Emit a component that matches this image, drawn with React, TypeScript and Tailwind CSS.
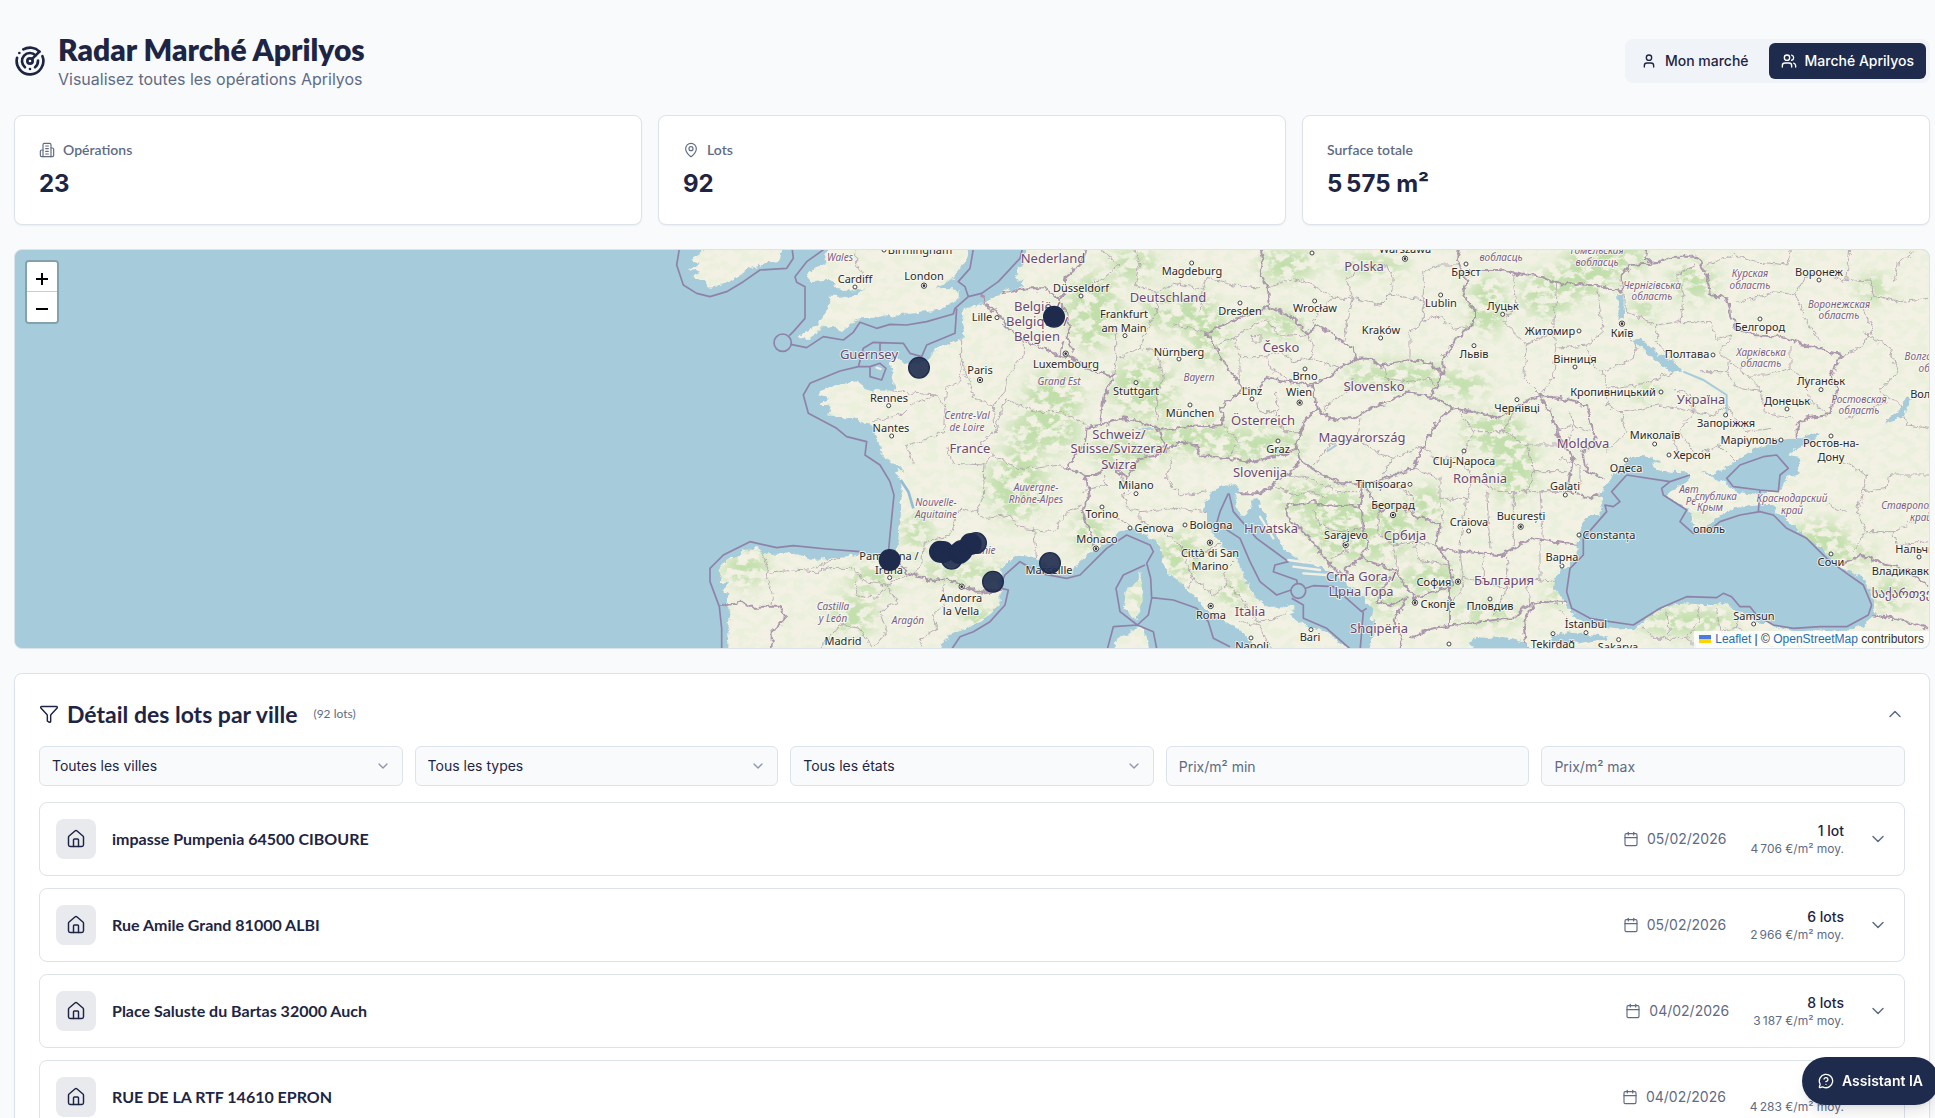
import { useState } from 'react';
import type { ReactNode } from 'react';
import {
  Calendar,
  ChevronDown,
  ChevronUp,
  Filter,
  Home,
  MapPin,
  MessageCircleQuestion,
  Radar,
  User,
  Users,
} from 'lucide-react';

interface Operation {
  address: string;
  date: string;
  lots: string;
  price: number;
}

const operations: Operation[] = [
  { address: 'impasse Pumpenia 64500 CIBOURE', date: '05/02/2026', lots: '1 lot', price: 4706 },
  { address: 'Rue Amile Grand 81000 ALBI', date: '05/02/2026', lots: '6 lots', price: 2966 },
  { address: 'Place Saluste du Bartas 32000 Auch', date: '04/02/2026', lots: '8 lots', price: 3187 },
  { address: 'RUE DE LA RTF 14610 EPRON', date: '04/02/2026', lots: '4 lots', price: 4283 },
];

// French grouping: narrow no-break space between thousands
function formatNumber(n: number): string {
  return String(n).replace(/\B(?=(\d{3})+$)/g, '\u202f');
}

// All map geometry is in thirds of a pixel, origin near the Irish coast.
const LAND = [
  // continent
  'M1105 0L1085 60 1065 95 1035 130 1030 145 1010 150 965 178 925 185 912 195 908 235 915 262 905 280 880 292 840 308 812 325 808 345 790 355 750 350 730 354 718 342 690 345 698 375 695 400 703 425 697 438 670 435 650 432 640 440 620 432 600 415 580 408 560 415 535 420 510 430 480 438 478 448 495 452 512 462 485 470 482 480 505 480 510 500 500 508 530 510 560 520 580 518 600 530 625 535 645 555 655 575 650 590 665 608 658 612 680 645 715 660 735 680 720 672 708 690 722 702 725 730 722 820 715 880 705 922 690 932 660 927 620 932 600 928 560 937 520 940 470 945 400 925 360 927 310 925 290 910 260 912 235 932 200 945 172 975 185 990 182 1010 205 1012 190 1035 205 1050 200 1075 210 1110 205 1150 205 1220L835 1220 850 1190 870 1170 930 1145 990 1105 1020 1080 1018 1050 1028 1035 1010 1010 1032 985 1020 975 1040 950 1060 935 1095 930 1130 940 1140 955 1180 965 1215 975 1240 970 1260 950 1290 925 1308 910 1330 900 1360 880 1375 860 1410 848 1440 855 1455 870 1490 890 1505 920 1510 960 1525 985 1555 1010 1580 1035 1610 1055 1630 1085 1665 1110 1690 1128 1730 1145 1750 1165 1775 1195 1790 1220L2075 1220 2000 1162 1950 1145 1905 1125 1892 1105 1905 1095 1905 1080 1850 1085 1820 1085 1790 1060 1755 1010 1745 975 1730 940 1700 915 1680 895 1655 860 1645 835 1640 810 1630 790 1635 775 1655 740 1680 725 1720 718 1735 732 1740 748 1722 750 1730 790 1745 818 1765 800 1775 770 1795 780 1810 800 1830 850 1860 890 1880 920 1920 945 1970 960 2020 985 2050 1010 2080 1035 2110 1055 2120 1075 2140 1090 2135 1120 2150 1150 2130 1190 2135 1220L3900 1220V0Z',
  // Great Britain
  'M930 0L920 45 895 80 880 100 850 118 830 130 880 130 897 140 895 165 860 180 830 195 780 200 740 205 710 218 690 210 640 218 600 220 575 235 545 262 520 240 490 245 470 265 440 285 415 278 430 265 470 240 495 205 515 165 510 155 550 155 590 152 612 130 590 135 570 140 535 125 500 105 455 108 440 90 470 70 500 50 495 30 520 0Z',
  // Ireland
  'M140 0L110 35 90 45 120 55 90 70 120 80 95 95 130 110 150 125 180 120 220 100 270 70 330 48 360 45 370 0Z',
  // Corsica, Sardinia
  'M1440 978L1447 1010 1450 1060 1440 1100 1430 1125 1410 1110 1390 1070 1400 1030 1430 1015Z',
  'M1360 1220L1370 1180 1410 1165 1440 1145 1460 1175 1470 1220Z',
].join('');

const INLAND_WATER = [
  // Black Sea
  'M2895 655L2870 670 2855 700 2830 725 2820 750 2828 775 2820 810 2785 810 2775 825 2760 860 2755 900 2748 930 2725 965 2705 970 2690 1000 2680 1025 2700 1045 2715 1075 2735 1100 2740 1115 2780 1135 2830 1148 2870 1153 2915 1152 2930 1145 2950 1125 2990 1100 3030 1080 3080 1075 3130 1080 3170 1080 3200 1070 3210 1090 3240 1100 3270 1115 3285 1135 3320 1130 3350 1145 3400 1160 3470 1155 3520 1160 3570 1155 3610 1140 3635 1120 3645 1080 3630 1040 3610 1000 3570 980 3530 965 3505 935 3470 900 3420 860 3380 820 3350 800 3340 780 3300 780 3260 785 3220 790 3185 810 3160 825 3140 845 3110 850 3100 840 3090 810 3080 790 3040 765 3017 755 3030 740 3065 720 3095 695 3080 682 3030 680 2990 675 2975 660 3000 645 2960 635 2920 630Z',
  // Sea of Azov
  'M3120 680L3160 685 3195 670 3220 650 3270 620 3310 605 3350 585 3420 580 3480 565 3460 590 3415 610 3380 630 3418 640 3415 685 3380 695 3370 725 3350 740 3320 740 3300 750 3240 745 3210 730 3190 710Z',
  // reservoirs
  'M2875 150L2890 150 2892 220 2876 224Z',
  'M2920 285L2945 280 2962 300 3000 330 3040 345 3070 380 3040 382 2965 330Z',
  'M3740 450L3755 460 3735 510 3675 540 3685 520 3725 490Z',
  // Marmara and the north Aegean
  'M2670 1175L2720 1162 2810 1170 2850 1178 2760 1195 2690 1200Z',
  'M2520 1175L2560 1180 2600 1195 2600 1215 2520 1215Z',
  'M2430 1190L2450 1175 2480 1180 2520 1175 2520 1215 2440 1215Z',
  // Zeeland, Venice, Kvarner
  'M1035 120L1060 95 1080 110 1095 100 1085 125 1050 142Z',
  'M1780 760L1795 765 1805 800 1820 810 1815 830 1795 820 1780 790Z',
  'M1480 555L1420 545 1470 560Z',
].join('');

const MARITIME = [
  'M60 0L50 60 70 120 110 145 150 155 200 140 250 110 300 75 380 70 400 40 395 0',
  'M510 0L440 50 405 95 410 112 435 125 435 220 400 260 388 272M392 298L440 308 490 275 550 285 580 262 600 232 650 250 690 238 740 240 800 230 880 207 885 190 925 155 965 145 1015 110 1080 40 1090 0',
  'M942 0L930 70 895 110 915 125 925 155',
  'M890 190L885 265 800 300 785 335 750 325 730 295 640 292 610 310 595 365 630 365 630 395 665 405 678 370 660 355 630 365M660 292V320M595 365L540 378 450 415 430 450 445 505 530 550 560 575 620 590 615 630 660 660 690 710 702 750 690 870 685 925',
  'M600 920L500 912 400 902 350 908 270 890 190 930 150 970 150 1010 178 1085 185 1150 185 1220',
  'M870 1220L900 1175 940 1160 990 1130 1035 1080 1045 1035 1025 1030M1025 1010L1035 990 1080 950 1140 985 1220 1000 1260 990 1310 940 1340 910 1400 870 1470 900 1480 920 1460 955 1472 1000 1475 1060 1465 1110 1432 1140 1380 1100 1368 1030 1390 990 1455 960',
  'M1475 1058L1540 1065 1610 1090 1645 1130 1660 1180 1710 1205M1432 1140L1360 1145 1340 1220M1432 1140L1480 1160 1492 1220',
  'M1705 745L1680 800 1670 835 1740 880 1770 950 1800 1010 1850 1050 1893 1035M1895 1060L1930 1080 1930 1120 2000 1150 2080 1220',
  'M1707 745L1720 800 1790 880 1885 950 1845 960 1840 980 1910 1005 1912 1015M1937 1030L1960 1022 2020 1025 2060 1060 2105 1100 2120 1090M2110 1100L2100 1220',
  'M2900 690L3030 710 3090 690M2900 690L2855 740 2880 770 2860 785 2835 780 2840 800 2770 880 2770 930 2730 970 2720 1040 2735 1090 2790 1120 2850 1130 2920 1140 3000 1090 3080 1055 3170 1058 3190 1045 3215 1055 3240 1085 3270 1085 3290 1110 3340 1140 3400 1150 3480 1145 3560 1145 3625 1110 3635 1080 3610 1020 3560 985 3500 940 3440 880 3380 850 3340 810 3300 800 3240 810 3180 830 3150 855 3100 865 3060 830 3080 795 3010 750 3005 730 3030 710',
  'M3200 700L3240 660 3310 635 3350 630 3385 670 3360 690 3355 740 3300 735 3220 725ZM3300 735L3295 800',
].join('');

const BORDERS = [
  'M965 145L980 185 1020 210 1035 240 1090 285 1140 305 1190 330 1240 340 1300 380 1360 395 1330 460 1320 540 1280 545 1275 590 1240 640 1220 670 1275 690 1290 750 1265 800 1290 860 1300 905',
  'M1030 145L1100 130 1160 130 1195 165 1215 150 1215 100 1260 60 1285 0M1195 165L1220 200 1230 250 1220 280 1240 320M1200 330L1210 290',
  'M1320 540L1390 520 1440 530 1500 555 1600 545 1690 540 1680 490 1750 430 1690 350 1640 265 1720 225 1800 195 1830 180 1822 120 1800 90 1810 50 1800 0',
  'M1820 185L1890 210 1920 240 1945 270 1970 240 2020 270 2040 285 2080 310 2090 340 2040 370 2010 395 1960 415M1750 430L1800 430 1820 395 1880 410 1960 420 1970 490 2010 520 2080 520 2140 485 2190 470 2240 440 2310 455 2350 385',
  'M2090 340L2135 342 2160 362 2250 345 2310 355 2350 385 2350 340 2390 280 2445 230 2445 200 2410 150 2420 110 2390 40 2400 0',
  'M2310 455L2380 490 2330 530 2290 600 2260 670 2200 690 2150 710 2110 715 2040 715 1970 680 1920 645 1910 610 1920 560 1940 520 1970 490M2380 490L2480 510 2510 520 2580 480 2640 450',
  'M1275 690L1310 690 1350 660 1400 700 1440 640 1500 630 1560 590 1610 600 1620 630 1700 640 1760 650 1850 635 1910 610M1500 555L1510 600 1500 630',
  'M1735 745L1800 745 1840 720 1880 690 1920 650M1880 780L1960 770 2000 785 2100 780 2110 715 2160 800 2210 770 2260 810 2340 835 2330 900 2370 960 2380 1020 2260 1060 2210 980 2160 960 2100 940 2125 900 2110 850 2110 800 2100 780',
  'M1880 780L1880 810 1960 890 2010 960 2060 1000 2060 970 2100 940M2210 980L2160 1040 2150 1070 2190 1080 2240 1060 2200 1130 2230 1180 2220 1215',
  'M2340 910L2400 920 2520 930 2620 880 2680 890 2758 900M2250 1180L2300 1155 2340 1145 2450 1130 2560 1120 2590 1090 2630 1070 2735 1075M2370 1020L2370 1140M2620 1080L2590 1130 2600 1215',
  'M2640 450L2680 520 2700 580 2740 640 2720 740 2790 760 2825 750M2640 450L2700 460 2780 480 2795 540 2810 600 2770 620 2780 680 2830 700',
  'M2430 75L2520 75 2640 95 2690 115 2740 115 2830 125 2885 140 2885 95 2910 60 2990 55 3040 35 3110 35 3140 90 3150 150 3200 160 3225 250 3280 270 3360 275 3400 290 3470 310 3545 330 3510 390 3530 430 3510 510 3440 520 3410 545 3410 580M2990 55L2955 40 2960 0',
  'M705 925L740 985 820 1008 850 1000 950 1040 1025 1035M180 1085L240 1070 270 1085 360 1085 375 1120 335 1160 335 1220',
  'M3545 960L3600 930 3680 960 3740 975 3807 1025M3630 1110L3700 1120 3740 1130 3807 1150',
].join('');

const REGIONS = [
  'M697 438L760 445 830 450 855 490 850 560 780 590 740 600 760 655M855 490L860 430 900 410 905 340 905 280M905 340L940 460 1000 480 1035 440 1040 400 1090 330 1090 285M1000 480L1005 560 960 590 1000 630 975 660 880 655 860 610M1005 560L1035 460 1120 500 1200 500 1280 540M1000 630L1070 670 1130 670 1200 660 1220 670',
  'M975 660L970 750 950 800 980 820 1050 810 1080 850 1180 860 1220 800 1265 780M950 800L900 790 870 870 790 895 785 960 760 990M1120 850L1130 940M830 450L750 480 720 510 640 530',
  'M590 20L590 60 610 90M460 970L500 950 540 940M310 925L325 975 320 1000 340 1060 335 1085M325 985L400 975 470 980 520 970 580 970 610 1010 680 1020 650 1060 590 1050 590 1010M680 1020L740 990M680 1020L710 1070 660 1100 680 1160 640 1209 600 1150 540 1140 480 1209M850 1005L850 1080 820 1110 830 1150 780 1180 790 1209',
  'M1420 0L1440 60 1425 120 1490 140 1540 115 1630 130 1640 100 1720 120 1800 130M1490 140L1490 200 1460 260 1440 310 1370 340 1370 250 1330 240M1440 310L1490 320 1510 400 1490 440 1490 530M1540 240L1600 250 1640 265M1630 130L1620 200M1320 15L1380 60 1330 100 1280 130M1370 340L1360 395',
  'M1820 130L1900 100 1960 120 2020 160 2080 160 2060 100 2120 60 2180 60 2200 100 2190 150 2160 180 2080 160M2020 160L1970 200 1960 240M2080 160L2060 240 2050 300M2190 150L2290 165 2290 80 2340 60 2400 60M2290 165L2290 230 2250 260 2250 345M2290 230L2330 210 2380 250 2440 240',
  'M1670 300L1720 280 1740 330 1740 390 1730 420M1720 280L1780 240 1820 225 1860 270 1920 275 1945 270M1740 335L1820 335 1830 370 1880 400M1820 335L1860 320 1900 350 1950 340 1960 300 1945 270M1775 275L1800 270 1800 290 1780 292ZM1950 340L1980 350 2040 370M2170 360L2180 400 2240 410 2310 400 2330 430M2080 400L2060 440 2000 480M2000 480L1990 510',
  'M1690 540L1740 590 1700 640M1790 470L1800 500 1850 500 1850 440M1850 500L1870 560 1920 560M2100 520L2090 580 2150 620 2200 640 2170 690M2090 580L2010 600 1960 660M2200 640L2290 600',
  'M1390 740L1400 790 1440 800 1550 790 1640 800M1380 690L1410 740 1390 760M1530 640L1520 700 1560 750 1640 740M1440 800L1440 830 1500 850 1560 900 1600 940 1660 910 1680 895M1560 900L1600 1000 1660 1050 1700 1020 1690 980 1730 940M1700 1020L1740 1050 1790 1130 1850 1120 1880 1100M1740 1130L1800 1140 1830 1209M1600 1000L1580 1035M1330 690L1340 720 1270 740M1320 790L1410 840',
  'M1840 720L1900 750 1960 740 2000 760M1880 690L1950 700 2030 740 2100 740M1960 790L1980 840 2040 860 2060 920 2010 940M2040 860L2110 850M2160 800L2150 860 2200 900 2260 890 2330 900M2200 900L2210 980M2260 810L2260 750 2200 720M2260 890L2280 950 2370 960',
  'M2260 670L2340 700 2340 760 2420 760 2440 700 2520 740 2600 740 2720 740M2340 760L2350 830M2420 760L2400 900M2440 700L2400 640 2320 640 2290 600M2400 640L2440 560 2530 560 2600 600 2620 680 2600 740M2440 560L2400 500M2530 560L2560 500M2600 600L2700 600M2480 740L2490 910M2560 740L2560 900M2640 740L2650 880M2620 680L2720 680',
  'M2400 920L2410 1000 2470 1010 2470 930M2470 1010L2540 1030 2600 1000 2690 1010M2540 930L2540 1030 2500 1110M2600 1000L2610 1080M2410 1000L2400 1050 2370 1070M2640 890L2640 1010',
  'M2560 80L2570 180 2530 230 2600 300 2680 260 2690 115M2600 300L2590 400 2640 450M2680 260L2690 310 2780 300 2830 260 2810 130M2690 310L2680 400 2640 450M2780 300L2800 360 2830 380 2920 340 2930 300 2900 270M2830 380L2840 430 2930 420 3000 400 3040 380M2840 430L2840 480 2880 500 2900 560 2840 620M2880 500L3000 480 3100 500 3090 450 3040 430M3100 500L3060 560 3100 620M3100 500L3160 510 3200 480 3250 560 3340 550',
  'M2890 140L2900 200 2990 240 3060 230 3070 150 3050 90 3110 60M2990 240L2990 290 3040 345M3060 230L3150 230 3170 280 3220 270 3180 320 3210 350 3200 380 3120 380M3210 350L3260 390 3320 390 3390 370 3390 300M3260 390L3300 430 3310 500 3400 520M3390 370L3440 400 3450 470 3510 510M3200 380L3230 430 3310 440',
  'M3140 60L3220 30 3280 50 3380 60 3400 0M3220 170L3280 160 3340 140 3410 150 3430 100 3480 80 3560 110 3630 105 3640 150 3720 170 3807 160M3410 150L3430 210 3480 290M3560 110L3570 0M3700 110L3720 50 3760 20M3640 150L3610 200 3640 250 3600 310 3545 330M3610 260L3690 310 3710 380 3660 440 3720 480 3740 540 3807 550M3560 520L3620 500 3680 470',
  'M3540 640L3620 690 3610 740 3680 730 3690 690 3807 690M3610 740L3590 800 3620 860 3580 920M3500 780L3560 800M3620 860L3700 860 3710 900 3807 890M3700 860L3760 830M3090 640L3180 600 3230 650M3040 580L3060 640',
  'M2950 1140L2980 1180 3080 1180 3110 1209M3080 1180L3120 1130 3110 1080M3240 1100L3230 1150 3290 1170 3340 1209M2700 1090L2740 1140M3020 1100L3030 1170M3170 1090L3180 1160 3230 1150M3400 1160L3420 1209M3660 1160L3640 1209M2700 600L2760 580M2690 560L2740 540 2790 560M2730 500L2740 540 2720 600M2760 620L2800 590M2700 640L2760 660 2760 720',
].join('');

// Forested or hilly areas: cx, cy, rx, ry
const GREEN_AREAS: number[][] = [
  [770, 860, 45, 60], [1070, 720, 90, 110], [1180, 460, 90, 80], [1150, 560, 110, 60], [900, 980, 150, 30], [1300, 200, 80, 120],
  [1450, 430, 100, 90], [1600, 580, 160, 50], [1400, 620, 110, 50], [1650, 280, 60, 80], [1560, 200, 120, 60], [1780, 600, 160, 50],
  [1860, 240, 90, 40], [2200, 390, 160, 40], [2400, 420, 90, 40], [2500, 560, 100, 60], [2560, 660, 70, 110], [2300, 780, 60, 60],
  [2100, 860, 170, 90], [1960, 760, 120, 50], [1560, 930, 70, 70], [1720, 1040, 50, 50], [2320, 1000, 90, 50], [2480, 1110, 110, 30],
  [2480, 180, 60, 90], [2660, 150, 80, 70], [2760, 110, 110, 50], [2840, 40, 130, 50], [2950, 190, 40, 40], [3100, 110, 70, 60],
  [3480, 880, 90, 50], [3560, 930, 90, 30], [3080, 1130, 160, 40], [2690, 1050, 40, 30], [3690, 1050, 60, 50], [3120, 820, 30, 14],
  [640, 1000, 80, 40], [960, 1130, 60, 40], [260, 970, 70, 50], [580, 1110, 70, 60], [1290, 860, 50, 60], [1430, 1050, 22, 60],
  [3640, 130, 50, 40], [2960, 440, 40, 30], [2130, 60, 120, 30], [1880, 60, 90, 50], [1420, 60, 70, 50], [2180, 1050, 60, 60],
];

type LabelKind = 'city' | 'country' | 'region';
type MapLabel = [text: string, x: number, y: number];

const labels: Record<LabelKind, MapLabel[]> = {
  city: [
    ['Birmingham', 780, 26], ['Cardiff', 584, 113], ['London', 792, 105], ['Lille', 967, 228], ['Rennes', 686, 470],
    ['Nantes', 694, 560], ['Paris', 961, 388], ['Luxembourg', 1219, 370], ['Düsseldorf', 1264, 140], ['Magdeburg', 1595, 91],
    ['Dresden', 1740, 209], ['Frankfurt', 1393, 219], ['am Main', 1393, 260], ['Nürnberg', 1557, 332], ['Stuttgart', 1428, 450],
    ['München', 1591, 516], ['Linz', 1777, 449], ['Wien', 1918, 453], ['Brno', 1936, 405], ['Wrocław', 1964, 201],
    ['Warszawa', 2235, 25], ['Lublin', 2342, 187], ['Kraków', 2162, 266], ['Брэст', 2418, 94], ['Львів', 2442, 339],
    ['Луцьк', 2528, 194], ['Чернівці', 2571, 500], ['Житомир', 2671, 270], ['Київ', 2885, 277], ['Вінниця', 2745, 353],
    ['Полтава', 3080, 339], ['Кропивницький', 2859, 452], ['Белгород', 3300, 258], ['Воронеж', 3477, 93], ['Луганськ', 3484, 421],
    ['Донецьк', 3381, 479], ['Запоріжжя', 3198, 545], ['Миколаїв', 2986, 583], ['Маріуполь', 3266, 596], ['Ростов-на-', 3513, 606],
    ['Дону', 3513, 648], ['Волгоград', 3835, 458], ['Херсон', 3097, 642], ['Одеса', 2898, 682], ['Galați', 2716, 735],
    ['București', 2583, 826], ['Constanța', 2848, 883], ['Варна', 2706, 948], ['İstanbul', 2778, 1150], ['Tekirdağ', 2678, 1208],
    ['Samsun', 3281, 1125], ['Sakarya', 2875, 1218], ['Сочи', 3513, 962], ['Нальчик', 3775, 923], ['Владикавказ', 3738, 989],
    ['ополь', 3147, 865], ['Pamplona /', 688, 944], ['Iruña', 688, 986], ['Andorra', 904, 1070], ['la Vella', 904, 1110],
    ['Marseille', 1168, 988], ['Madrid', 548, 1199], ['Graz', 1855, 623], ['Milano', 1427, 733], ['Torino', 1327, 819],
    ['Genova', 1482, 860], ['Bologna', 1652, 851], ['Monaco', 1310, 893], ['Città di San', 1651, 935], ['Marino', 1651, 976],
    ['Roma', 1653, 1123], ['Napoli', 1775, 1216], ['Bari', 1951, 1187], ['Timișoara', 2162, 730], ['Cluj-Napoca', 2411, 660],
    ['Београд', 2198, 791], ['Craiova', 2426, 844], ['Sarajevo', 2058, 881], ['София', 2323, 1023], ['Скопје', 2335, 1089],
    ['Пловдив', 2490, 1096],
  ],
  country: [
    ['Nederland', 1180, 54], ['België /', 1132, 198], ['Belgique /', 1132, 242], ['Belgien', 1132, 288], ['Guernsey', 628, 343],
    ['France', 929, 625], ['Deutschland', 1524, 171], ['Česko', 1862, 322], ['Slovensko', 2141, 437], ['Österreich', 1808, 540],
    ['Magyarország', 2107, 591], ['Schweiz/', 1377, 581], ['Suisse/Svizzera/', 1377, 625], ['Svizra', 1377, 671],
    ['Slovenija', 1800, 697], ['Hrvatska', 1834, 865], ['Србија', 2235, 884], ['Crna Gora /', 2104, 1008], ['Црна Гора', 2104, 1052],
    ['Shqipëria', 2157, 1165], ['Italia', 1769, 1113], ['România', 2459, 714], ['Moldova', 2770, 609], ['Україна', 3122, 478],
    ['Polska', 2112, 79], ['България', 2531, 1020], ['საქართველო', 3762, 1060],
  ],
  region: [
    ['Wales', 540, 47], ['Grand Est', 1197, 421], ['Centre-Val', 920, 522], ['de Loire', 920, 557], ['Nouvelle-', 829, 783],
    ['Aquitaine', 829, 818], ['Auvergne-', 1127, 739], ['Rhône-Alpes', 1127, 774], ['Occitanie', 945, 927], ['Castilla', 520, 1096],
    ['y León', 520, 1131], ['Aragón', 744, 1138], ['Bayern', 1617, 408], ['вобласць', 2522, 47], ['Гомельская', 2810, 26],
    ['вобласць', 2812, 62], ['Чернігівська', 2975, 131], ['область', 2975, 166], ['Курская', 3270, 97], ['область', 3270, 132],
    ['Воронежская', 3537, 189], ['область', 3537, 223], ['Харківська', 3304, 333], ['область', 3304, 367], ['Ростовская', 3598, 474],
    ['область', 3598, 508], ['Волгоградская', 3838, 345], ['область', 3838, 381], ['Авт', 3086, 745], ['Ре', 3092, 779],
    ['спублика', 3167, 764], ['Крым', 3150, 799], ['Краснодарский', 3397, 770], ['край', 3397, 807], ['Ставропольский', 3782, 791],
    ['край', 3782, 827],
  ],
};

const labelStyles: Record<LabelKind, string> = {
  city: 'fill-[#2b2b2b] text-[11px]',
  country: 'fill-[#6b4a72] text-[13px]',
  region: 'fill-[#7b5f85] text-[10px] italic',
};

const towns: number[][] = [
  [672, 15], [585, 126], [1011, 218], [686, 482], [695, 573], [1263, 153], [1595, 54], [1740, 174], [1395, 272], [1557, 342],
  [1428, 413], [1590, 480], [1776, 462], [1935, 372], [1964, 168], [1956, 24], [2342, 150], [2162, 279], [2418, 57], [2442, 302],
  [2528, 208], [2757, 258], [2745, 366], [3159, 330], [3003, 441], [3300, 222], [3477, 105], [3483, 434], [3381, 492], [3197, 510],
  [2984, 597], [3363, 585], [3513, 573], [2571, 464], [3027, 630], [2898, 645], [2716, 750], [2757, 870], [2706, 963], [2778, 1163],
  [2679, 1166], [3281, 1137], [3513, 927], [3777, 936], [689, 998], [1854, 588], [1428, 746], [1326, 786], [1410, 849], [1575, 840],
  [1773, 1179], [1953, 1154], [2250, 718], [2412, 618], [2426, 858], [2490, 1062], [2876, 1184], [2367, 1197],
];

const capitals: number[][] = [
  [792, 122], [960, 405], [1217, 326], [1919, 473], [2235, 41], [2886, 236], [1308, 911], [1650, 893], [1652, 1083], [2199, 810],
  [2057, 900], [905, 1025], [2394, 1010], [2265, 1073], [2582, 845],
];

// cx, cy, opacity: stacked operations read darker
const markers: number[][] = [
  [1182, 215, 1], [777, 368, 0.9], [689, 945, 1], [840, 920, 1], [850, 921, 1], [875, 941, 0.9], [898, 924, 1], [905, 918, 1],
  [932, 897, 1], [948, 894, 0.9], [999, 1010, 0.9], [1170, 954, 0.9],
];

function EuropeMap() {
  return (
    <svg
      viewBox="-645 5 1914 398"
      preserveAspectRatio="xMidYMid slice"
      className="block h-full w-full font-['Noto_Sans','DejaVu_Sans',sans-serif]"
      role="img"
      aria-label="Carte des opérations"
    >
      <defs>
        <clipPath id="land">
          <path d={LAND} />
        </clipPath>
        <filter id="rough" x="-5%" y="-5%" width="110%" height="110%">
          <feTurbulence type="fractalNoise" baseFrequency="0.05" numOctaves="3" seed="4" result="n" />
          <feDisplacementMap in="SourceGraphic" in2="n" scale="22" xChannelSelector="R" yChannelSelector="G" />
        </filter>
        {/* breaks the hill areas up into grainy patches */}
        <filter id="woods">
          <feGaussianBlur stdDeviation="24" result="area" />
          <feTurbulence type="fractalNoise" baseFrequency="0.03 0.04" numOctaves="5" seed="7" />
          <feColorMatrix values="0 0 0 0 0  0 0 0 0 0  0 0 0 0 0  7 0 0 0 -2.9" result="grain" />
          <feComposite in="area" in2="grain" operator="in" />
        </filter>
        <filter id="terrain" x="0" y="0" width="100%" height="100%">
          <feTurbulence type="fractalNoise" baseFrequency="0.03 0.04" numOctaves="5" seed="11" />
          <feColorMatrix values="0 0 0 0 0.74  0 0 0 0 0.86  0 0 0 0 0.66  6 0 0 0 -2.8" />
        </filter>
      </defs>
      <g transform="scale(0.33333)">
        <g filter="url(#rough)">
          <path d={LAND} fill="#f2f1e3" />
        </g>
        <g clipPath="url(#land)">
          <rect x="0" y="0" width="3900" height="1220" filter="url(#terrain)" opacity="0.38" />
          <g filter="url(#woods)" fill="#b9dba2" opacity="0.85">
            {GREEN_AREAS.map(([cx, cy, rx, ry], i) => (
              <ellipse key={i} cx={cx} cy={cy} rx={rx} ry={ry} />
            ))}
          </g>
        </g>
        <g fill="none" strokeLinejoin="round" filter="url(#rough)">
          <path d={REGIONS} stroke="#ab9cab" strokeWidth="3" opacity="0.8" />
          <path d={BORDERS} stroke="#a48fa6" strokeWidth="6" opacity="0.9" />
        </g>
        <path d="M3070 380L3130 405 3200 450 3200 510M2000 620L2030 600M3900 610L3830 600" fill="none" stroke="#a6cbda" strokeWidth="6" />
        <path d={INLAND_WATER} fill="#a6cbda" filter="url(#rough)" />
        <path d={MARITIME} fill="none" stroke="#8f82a8" strokeWidth="5" strokeLinejoin="round" />
        <g fill="none" stroke="#8f82a8" strokeWidth="5">
          <circle cx="368" cy="293" r="26" />
          <circle cx="1915" cy="1038" r="22" />
        </g>
        <path
          d="M1885 945L1960 955M1900 965L1980 975M1930 985L2000 990M1800 815L1840 880M730 690L745 750M650 368L662 372"
          stroke="#f2f0e2"
          strokeWidth="7"
          strokeLinecap="round"
        />
        <path d="M722 705L745 740 760 790" fill="none" stroke="#92bdd3" strokeWidth="8" />
        <g fill="#fff" stroke="#444" strokeWidth="3">
          {towns.map(([cx, cy], i) => (
            <circle key={i} cx={cx} cy={cy} r="6" />
          ))}
          {capitals.map(([cx, cy], i) => (
            <circle key={i} cx={cx} cy={cy} r="8" />
          ))}
        </g>
        <g fill="#333">
          {capitals.map(([cx, cy], i) => (
            <circle key={i} cx={cx} cy={cy} r="4" />
          ))}
        </g>
      </g>
      <g textAnchor="middle" stroke="#fbfaf3" strokeWidth="2" strokeOpacity="0.75" strokeLinejoin="round" paintOrder="stroke">
        {(Object.keys(labels) as LabelKind[]).map(kind =>
          labels[kind].map(([text, x, y]) => (
            <text key={`${text}-${x}-${y}`} x={Math.round(x / 3)} y={Math.round(y / 3)} className={labelStyles[kind]}>
              {text}
            </text>
          )),
        )}
      </g>
      <g transform="scale(0.33333)" fill="#1e2b4d" stroke="#1e2b4d" strokeWidth="4">
        {markers.map(([cx, cy, opacity], i) => (
          <circle key={i} cx={cx} cy={cy} r="31" fillOpacity={opacity} />
        ))}
      </g>
    </svg>
  );
}

function BuildingIcon() {
  return (
    <svg
      viewBox="0 0 24 24"
      className="size-4"
      fill="none"
      stroke="currentColor"
      strokeWidth="1.75"
      strokeLinecap="round"
      strokeLinejoin="round"
      aria-hidden="true"
    >
      <path d="M6 22V4a2 2 0 0 1 2-2h8a2 2 0 0 1 2 2v18Z" />
      <path d="M6 12H4a2 2 0 0 0-2 2v6a2 2 0 0 0 2 2h2" />
      <path d="M18 9h2a2 2 0 0 1 2 2v9a2 2 0 0 1-2 2h-2" />
      <path d="M10 6h4M10 10h4M10 14h4M10 18h4" />
    </svg>
  );
}

function StatCard({ icon, label, value }: { icon?: ReactNode; label: string; value: string }) {
  return (
    <div className="rounded-lg border border-[#dde3eb] bg-white p-6 shadow-xs">
      <h3 className="mb-2 flex items-center gap-2 font-['Lato',sans-serif] text-sm leading-5 font-semibold text-[#5f6b85]">
        {icon}
        {label}
      </h3>
      <p className="text-2xl leading-8 font-bold">{value}</p>
    </div>
  );
}

function FilterSelect({ label, id }: { label: string; id: string }) {
  return (
    <div className="relative">
      <select
        id={id}
        aria-label={label}
        className="h-10 w-full appearance-none rounded-md border border-[#dde3eb] bg-[#f8fafc] px-3 text-sm"
      >
        <option>{label}</option>
      </select>
      <ChevronDown className="pointer-events-none absolute top-3 right-3 size-4 text-[#8e96a8]" />
    </div>
  );
}

function PriceInput({ placeholder, id }: { placeholder: string; id: string }) {
  return (
    <input
      id={id}
      type="text"
      inputMode="numeric"
      aria-label={placeholder}
      placeholder={placeholder}
      className="h-10 w-full min-w-0 rounded-md border border-[#dde3eb] bg-[#f8fafc] px-3 text-sm placeholder:text-[#5f6b85]"
    />
  );
}

function OperationRow({ operation }: { operation: Operation }) {
  return (
    <button type="button" className="flex w-full items-center gap-4 rounded-lg border border-[#dde3eb] bg-white p-4 text-left">
      <span className="flex size-10 items-center justify-center rounded-lg bg-[#e8eaed]">
        <Home className="size-5" strokeWidth={1.75} />
      </span>
      <span className="flex-1 font-['Lato',sans-serif] text-base leading-6 font-bold">{operation.address}</span>
      <span className="flex items-center gap-6">
        <span className="flex items-center gap-2 text-sm text-[#5f6b85]">
          <Calendar className="size-4" strokeWidth={1.75} />
          {operation.date}
        </span>
        <span className="flex flex-col text-right">
          <span className="text-sm leading-5 font-medium">{operation.lots}</span>
          <span className="text-xs leading-4 text-[#5f6b85]">{formatNumber(operation.price)} €/m² moy.</span>
        </span>
        <ChevronDown className="size-5 text-[#5f6b85]" strokeWidth={1.75} />
      </span>
    </button>
  );
}

export default function App() {
  const [scope, setScope] = useState<'mine' | 'all'>('all');
  const [open, setOpen] = useState(true);

  const tab = 'flex h-9 items-center gap-2 rounded-md px-3 text-sm font-medium';
  const activeTab = 'bg-[#1e2b4d] text-white';

  return (
    <div className="h-screen overflow-hidden bg-[#f8fafc] font-['Inter',sans-serif] text-[#1e2544]">
      <main className="flex flex-col gap-6 pt-[31px] pr-[5px] pl-3.5">
        <header className="flex items-center justify-between">
          <div className="flex items-center gap-3">
            <Radar className="size-8" />
            <div>
              <h1 className="font-['Lato',sans-serif] text-3xl leading-9 font-extrabold">Radar Marché Aprilyos</h1>
              <p className="text-base leading-6 text-[#5f6b85]">Visualisez toutes les opérations Aprilyos</p>
            </div>
          </div>
          <div className="flex gap-2 rounded-lg bg-[#f0f3f7] p-1">
            <button type="button" onClick={() => setScope('mine')} className={`${tab} ${scope === 'mine' ? activeTab : ''}`}>
              <User className="size-4" />
              Mon marché
            </button>
            <button type="button" onClick={() => setScope('all')} className={`${tab} ${scope === 'all' ? activeTab : ''}`}>
              <Users className="size-4" />
              Marché Aprilyos
            </button>
          </div>
        </header>

        <section className="grid grid-cols-3 gap-4">
          <StatCard icon={<BuildingIcon />} label="Opérations" value="23" />
          <StatCard icon={<MapPin className="size-4" strokeWidth={1.75} />} label="Lots" value="92" />
          <StatCard label="Surface totale" value={`${formatNumber(5575)} m²`} />
        </section>

        <section className="relative h-[400px] overflow-hidden rounded-lg border border-[#dde3eb] bg-[#a6cbda]">
          <EuropeMap />
          <div className="absolute top-2.5 left-2.5 flex flex-col rounded-sm border-2 border-black/20 bg-clip-padding">
            <button
              type="button"
              aria-label="Zoom avant"
              className="flex h-[30px] w-[30px] items-center justify-center rounded-t-xs border-b border-[#ccc] bg-white pt-1 text-black"
            >
              <svg viewBox="0 0 12 12" className="size-3" stroke="currentColor" strokeWidth="2">
                <path d="M6 0v12M0 6h12" />
              </svg>
            </button>
            <button
              type="button"
              aria-label="Zoom arrière"
              className="flex h-[30px] w-[30px] items-center justify-center rounded-b-xs bg-white pt-1 text-black"
            >
              <svg viewBox="0 0 12 12" className="size-3" stroke="currentColor" strokeWidth="2">
                <path d="M0 6h12" />
              </svg>
            </button>
          </div>
          <div className="absolute right-0 bottom-0 bg-white/80 px-[5px] font-['Liberation_Sans',sans-serif] text-xs leading-[17px] text-[#333]">
            <a href="#leaflet" className="text-[#1f6fae]">
              <svg viewBox="0 0 12 8" className="mr-1 inline h-2 w-3 align-baseline" aria-hidden="true">
                <path fill="#4c7be1" d="M0 0h12v4H0z" />
                <path fill="#ffd500" d="M0 4h12v4H0z" />
              </svg>
              Leaflet
            </a>{' '}
            | ©{' '}
            <a href="#openstreetmap" className="text-[#1f6fae]">
              OpenStreetMap
            </a>{' '}
            contributors
          </div>
        </section>

        <section className="rounded-lg border border-[#dde3eb] bg-white p-6 shadow-xs">
          <button
            type="button"
            aria-expanded={open}
            onClick={() => setOpen(!open)}
            className="flex w-full items-center justify-between text-left"
          >
            <span className="flex items-center gap-2 font-['Lato',sans-serif]">
              <Filter className="size-5" strokeWidth={1.75} />
              <span className="text-[23px] leading-8 font-bold">Détail des lots par ville</span>
              <span className="ml-2 text-xs text-[#5f6b85]">(92 lots)</span>
            </span>
            {open ? (
              <ChevronUp className="size-5 text-[#5f6b85]" strokeWidth={1.75} />
            ) : (
              <ChevronDown className="size-5 text-[#5f6b85]" strokeWidth={1.75} />
            )}
          </button>

          {open && (
            <>
              <div className="mt-4 grid grid-cols-5 gap-3">
                <FilterSelect id="city" label="Toutes les villes" />
                <FilterSelect id="type" label="Tous les types" />
                <FilterSelect id="state" label="Tous les états" />
                <PriceInput id="price-min" placeholder="Prix/m² min" />
                <PriceInput id="price-max" placeholder="Prix/m² max" />
              </div>
              <div className="mt-4 flex flex-col gap-3">
                {operations.map(operation => (
                  <OperationRow key={operation.address} operation={operation} />
                ))}
              </div>
            </>
          )}
        </section>
      </main>

      <button
        type="button"
        className="fixed -right-1 bottom-[13px] flex h-12 items-center gap-2 rounded-full bg-[#1e2b4d] px-4 text-sm font-semibold text-white shadow-lg"
      >
        <MessageCircleQuestion className="size-4" />
        Assistant IA
      </button>
    </div>
  );
}
